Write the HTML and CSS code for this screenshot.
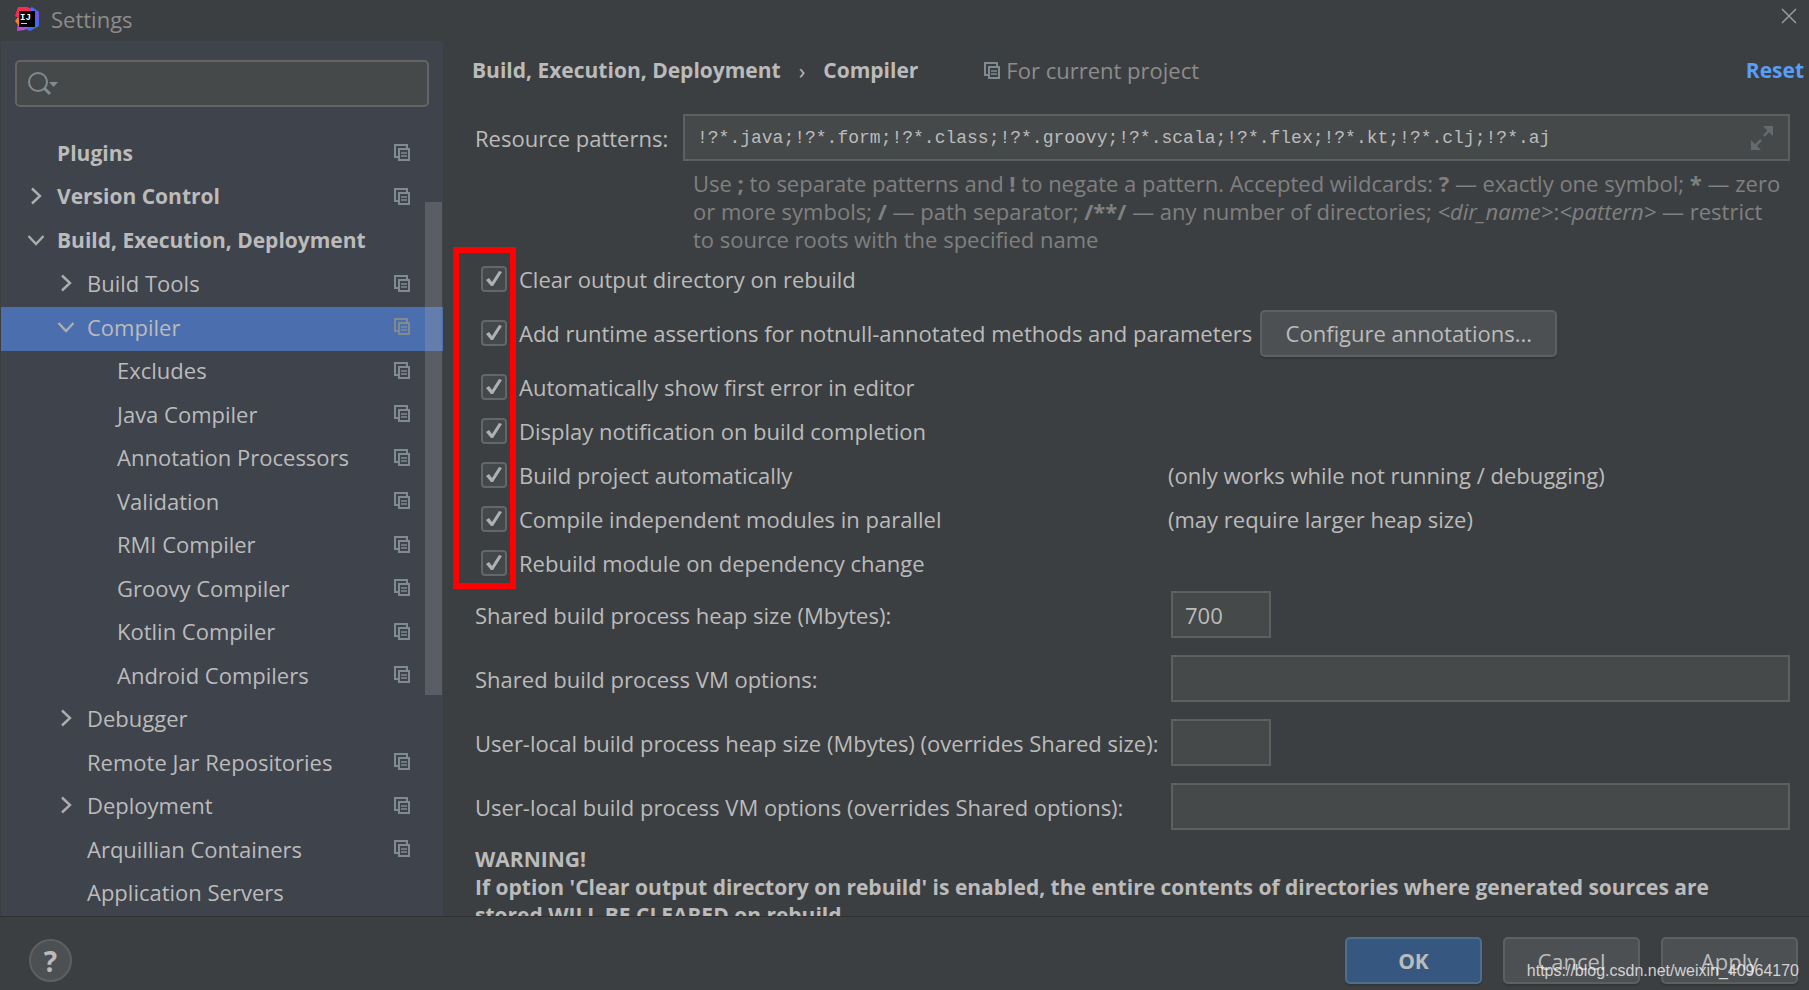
FILE: index.html
```html
<!DOCTYPE html>
<html lang="en">
<head>
    <meta charset="UTF-8">
    <meta name="viewport" content="width=device-width, initial-scale=1.0">
    <title>Settings</title>
    <link rel="stylesheet" href="styles.css">
</head>
<body>
    <!-- shared icons -->
    <svg class="icon-defs" width="0" height="0" aria-hidden="true">
        <symbol id="icon-project" viewBox="0 0 16 17">
            <path d="M13 4V1H1v12h3" fill="none" stroke="currentColor" stroke-width="2"/>
            <path d="M5 5h10v11H5z" fill="none" stroke="currentColor" stroke-width="2"/>
            <path d="M7 9h6M7 12h6" fill="none" stroke="currentColor" stroke-width="1.5"/>
        </symbol>
        <symbol id="icon-right" viewBox="0 0 20 20">
            <path d="M6 2.5l8 7.5-8 7.5" fill="none" stroke="currentColor" stroke-width="2.4"/>
        </symbol>
        <symbol id="icon-down" viewBox="0 0 20 20">
            <path d="M2.500 6l7.500 8 7.500-8" fill="none" stroke="currentColor" stroke-width="2.4"/>
        </symbol>
    </svg>

    <header class="titlebar">
        <svg class="logo" viewBox="0 0 24 24">
            <path d="M12 3l5-3 7 5v14l-9 5-6-3z" fill="#3f6df0"/>
            <path d="M19 3l5 2v8l-5-2z" fill="#6b57e0"/>
            <path d="M3 15l6 3 6 2-6 3-7 1z" fill="#b84fd0"/>
            <path d="M0 14l4-5 3 6-3 4z" fill="#fc801d"/>
            <path d="M3 0h10l4 5-5 7-8-1-4-2z" fill="#fe2857"/>
            <path d="M4 4h16v16H4z" fill="#000"/>
            <text x="5" y="13" class="logo-text">IJ</text>
            <path d="M6 16h6v1H6z" fill="#ccc"/>
        </svg>
        <h1>Settings</h1>
        <button class="close-btn" aria-label="Close">
            <svg viewBox="0 0 16 16"><path d="M1 1l14 14M15 1L1 15" fill="none" stroke="currentColor" stroke-width="1.5"/></svg>
        </button>
    </header>

    <div class="main">
        <aside class="sidebar">
            <div class="search">
                <svg viewBox="0 0 32 24">
                    <circle cx="11" cy="10" r="9" fill="none" stroke="currentColor" stroke-width="2"/>
                    <path d="M17 16l6 6" stroke="currentColor" stroke-width="3"/>
                    <path d="M22 10h9l-4.500 5z" fill="currentColor"/>
                </svg>
                <input type="text" aria-label="Search settings">
            </div>
            <nav class="tree">
                <a href="#" class="row bold"><span class="arrow"></span><span class="name">Plugins</span><svg class="project"><use href="#icon-project"/></svg></a>
                <a href="#" class="row bold"><svg class="arrow"><use href="#icon-right"/></svg><span class="name">Version Control</span><svg class="project"><use href="#icon-project"/></svg></a>
                <a href="#" class="row bold"><svg class="arrow"><use href="#icon-down"/></svg><span class="name">Build, Execution, Deployment</span></a>
                <a href="#" class="row level-1"><svg class="arrow"><use href="#icon-right"/></svg><span class="name">Build Tools</span><svg class="project"><use href="#icon-project"/></svg></a>
                <a href="#" class="row level-1 selected"><svg class="arrow"><use href="#icon-down"/></svg><span class="name">Compiler</span><svg class="project"><use href="#icon-project"/></svg></a>
                <a href="#" class="row level-2"><span class="arrow"></span><span class="name">Excludes</span><svg class="project"><use href="#icon-project"/></svg></a>
                <a href="#" class="row level-2"><span class="arrow"></span><span class="name">Java Compiler</span><svg class="project"><use href="#icon-project"/></svg></a>
                <a href="#" class="row level-2"><span class="arrow"></span><span class="name">Annotation Processors</span><svg class="project"><use href="#icon-project"/></svg></a>
                <a href="#" class="row level-2"><span class="arrow"></span><span class="name">Validation</span><svg class="project"><use href="#icon-project"/></svg></a>
                <a href="#" class="row level-2"><span class="arrow"></span><span class="name">RMI Compiler</span><svg class="project"><use href="#icon-project"/></svg></a>
                <a href="#" class="row level-2"><span class="arrow"></span><span class="name">Groovy Compiler</span><svg class="project"><use href="#icon-project"/></svg></a>
                <a href="#" class="row level-2"><span class="arrow"></span><span class="name">Kotlin Compiler</span><svg class="project"><use href="#icon-project"/></svg></a>
                <a href="#" class="row level-2"><span class="arrow"></span><span class="name">Android Compilers</span><svg class="project"><use href="#icon-project"/></svg></a>
                <a href="#" class="row level-1"><svg class="arrow"><use href="#icon-right"/></svg><span class="name">Debugger</span></a>
                <a href="#" class="row level-1"><span class="arrow"></span><span class="name">Remote Jar Repositories</span><svg class="project"><use href="#icon-project"/></svg></a>
                <a href="#" class="row level-1"><svg class="arrow"><use href="#icon-right"/></svg><span class="name">Deployment</span><svg class="project"><use href="#icon-project"/></svg></a>
                <a href="#" class="row level-1"><span class="arrow"></span><span class="name">Arquillian Containers</span><svg class="project"><use href="#icon-project"/></svg></a>
                <a href="#" class="row level-1"><span class="arrow"></span><span class="name">Application Servers</span></a>
                <div class="scrollbar"></div>
            </nav>
        </aside>

        <main class="content">
            <div class="breadcrumb">
                <h2>Build, Execution, Deployment</h2>
                <span class="separator">›</span>
                <h2>Compiler</h2>
                <span class="scope"><svg class="project"><use href="#icon-project"/></svg>For current project</span>
                <a href="#" class="reset">Reset</a>
            </div>

            <div class="patterns">
                <label for="patterns">Resource patterns:</label>
                <div class="pattern-field">
                    <input type="text" id="patterns" value="!?*.java;!?*.form;!?*.class;!?*.groovy;!?*.scala;!?*.flex;!?*.kt;!?*.clj;!?*.aj">
                    <svg viewBox="0 0 24 26"><path d="M13 1h10v10zM1 15v10h10z" fill="currentColor"/><path d="M14 11l6-7M4 22l7-7" stroke="currentColor" stroke-width="2.5"/></svg>
                </div>
            </div>
            <p class="hint">Use <b>;</b> to separate patterns and <b>!</b> to negate a pattern. Accepted wildcards: <b>?</b> — exactly one symbol; <b>*</b> — zero<br>or more symbols; <b>/</b> — path separator; <b>/**/</b> — any number of directories; <i>&lt;dir_name&gt;</i>:<i>&lt;pattern&gt;</i> — restrict<br>to source roots with the specified name</p>

            <div class="options">
                <div class="option">
                    <label><input type="checkbox" checked>Clear output directory on rebuild</label>
                </div>
                <div class="option with-button">
                    <label><input type="checkbox" checked>Add runtime assertions for notnull-annotated methods and parameters</label>
                    <button class="btn configure">Configure annotations...</button>
                </div>
                <div class="option">
                    <label><input type="checkbox" checked>Automatically show first error in editor</label>
                </div>
                <div class="option">
                    <label><input type="checkbox" checked>Display notification on build completion</label>
                </div>
                <div class="option">
                    <label><input type="checkbox" checked>Build project automatically</label>
                    <span>(only works while not running / debugging)</span>
                </div>
                <div class="option">
                    <label><input type="checkbox" checked>Compile independent modules in parallel</label>
                    <span>(may require larger heap size)</span>
                </div>
                <div class="option">
                    <label><input type="checkbox" checked>Rebuild module on dependency change</label>
                </div>
                <div class="highlight"></div>
            </div>

            <div class="fields">
                <label for="shared-heap">Shared build process heap size (Mbytes):</label>
                <input type="text" id="shared-heap" class="short" value="700">
                <label for="shared-vm">Shared build process VM options:</label>
                <input type="text" id="shared-vm">
                <label for="local-heap">User-local build process heap size (Mbytes) (overrides Shared size):</label>
                <input type="text" id="local-heap" class="short">
                <label for="local-vm">User-local build process VM options (overrides Shared options):</label>
                <input type="text" id="local-vm">
            </div>

            <p class="warning">WARNING!<br>If option 'Clear output directory on rebuild' is enabled, the entire contents of directories where generated sources are<br>stored WILL BE CLEARED on rebuild.</p>
        </main>
    </div>

    <footer class="footer">
        <button class="help-btn">?</button>
        <button class="btn primary">OK</button>
        <button class="btn">Cancel</button>
        <button class="btn">Apply</button>
        <span class="watermark">https://blog.csdn.net/weixin_40964170</span>
    </footer>
</body>
</html>
```
FILE: styles.css
```css
* {
    box-sizing: border-box;
}
body {
    margin: 0;
    height: 100vh;
    display: flex;
    flex-direction: column;
    overflow: hidden;
    font-family: "Open Sans", "Noto Sans", sans-serif;
    font-size: 22px;
    line-height: 28px;
    color: #bbbbbb;
    background-color: #3c3f41;
}
h1, h2, p {
    margin: 0;
    font-size: inherit;
}
h2 {
    font-size: 21px;
}
a {
    color: inherit;
    text-decoration: none;
}
input, button {
    font: inherit;
    color: inherit;
}
.icon-defs {
    position: absolute;
}

/* title bar */
.titlebar {
    display: flex;
    align-items: center;
    height: 41px;
    padding: 0 12px 4px 15px;
    flex-shrink: 0;
}
.titlebar h1 {
    flex: 1;
    margin-left: 12px;
    font-weight: normal;
    color: #8c8c8c;
}
.logo {
    width: 24px;
    height: 24px;
}
.logo-text {
    font: bold 9px "Liberation Mono", monospace;
    fill: #fff;
}
.close-btn {
    align-self: flex-start;
    margin-top: 4px;
    padding: 0;
    width: 16px;
    height: 24px;
    border: none;
    background: none;
    color: #9a9a9a;
}
.close-btn svg {
    display: block;
    width: 16px;
    height: 16px;
}

.main {
    flex: 1;
    display: flex;
    min-height: 0;
}

/* sidebar */
.sidebar {
    width: 443px;
    flex-shrink: 0;
    display: flex;
    flex-direction: column;
    padding-top: 19px;
    background-color: #3f434c;
    border-left: 1px solid #3c3f41;
}
.search {
    display: flex;
    align-items: center;
    height: 47px;
    margin: 0 14px 26px;
    padding: 0 10px;
    border: 2px solid #646464;
    border-radius: 5px;
    background-color: #45494a;
}
.search svg {
    width: 32px;
    height: 24px;
    color: #7f8b91;
}
.search input {
    flex: 1;
    min-width: 0;
    border: none;
    outline: none;
    background: none;
}
.tree {
    position: relative;
    flex: 1;
    display: flex;
    flex-direction: column;
}
.row {
    flex: 1;
    display: flex;
    align-items: center;
    padding: 0 33px 4px 25px;
}
.level-1 {
    padding-left: 55px;
}
.level-2 {
    padding-left: 85px;
}
.bold {
    font-size: 21px;
    font-weight: bold;
}
.selected {
    background-color: #4b6eaf;
}
.arrow {
    width: 20px;
    height: 20px;
    margin-right: 11px;
    color: #adadad;
}
.name {
    flex: 1;
    white-space: nowrap;
}
.project {
    width: 16px;
    height: 17px;
    color: #7f8b91;
}
.scrollbar {
    position: absolute;
    top: 69px;
    right: 1px;
    width: 17px;
    height: 63%;
    background-color: rgba(166, 166, 166, 0.27);
}

/* settings page */
.content {
    flex: 1;
    min-width: 0;
    overflow: hidden;
    padding: 15px 19px 0 32px;
}
.breadcrumb {
    display: flex;
    align-items: center;
    margin: 0 -14px 0 -3px;
    white-space: nowrap;
}
.separator {
    margin: 0 18px;
}
.scope {
    display: flex;
    align-items: center;
    margin-left: 66px;
    color: #8c8c8c;
}
.scope .project {
    margin-right: 6px;
}
.reset {
    margin-left: auto;
    font-size: 21px;
    font-weight: bold;
    color: #589df6;
}
.patterns {
    display: flex;
    align-items: center;
    margin-top: 30px;
}
.patterns label {
    width: 208px;
}
.pattern-field {
    flex: 1;
    display: flex;
    align-items: center;
    height: 47px;
    padding: 0 14px 0 12px;
    border: 2px solid #5e6060;
    background-color: #45494a;
}
.pattern-field input {
    flex: 1;
    padding: 0;
    border: none;
    outline: none;
    background: none;
    font-family: "Liberation Mono", monospace;
    font-size: 18px;
}
.pattern-field svg {
    width: 24px;
    height: 26px;
    color: #636b6f;
}
.hint {
    margin: 8px 0 4px 218px;
    color: #808080;
    white-space: nowrap;
}

/* check boxes */
.options {
    position: relative;
}
.option {
    display: grid;
    grid-template-columns: 693px 1fr;
    align-items: center;
    height: 44px;
    white-space: nowrap;
}
.with-button {
    display: flex;
    height: 64px;
}
.option label {
    display: flex;
    align-items: center;
}
.option input {
    appearance: none;
    width: 26px;
    height: 26px;
    margin: 0 12px 0 6px;
    border: 2px solid #646667;
    border-radius: 4px;
    background-color: #43494a;
}
.option input:checked::before {
    content: "";
    display: block;
    width: 22px;
    height: 22px;
    background-color: #b0b0b0;
    clip-path: polygon(3px 12px, 6px 10px, 9px 14px, 16px 3px, 19px 4px, 10px 18px, 8px 18px);
}
.highlight {
    position: absolute;
    top: -10px;
    bottom: -4px;
    left: -22px;
    width: 63px;
    border: 6px solid #ff0000;
    pointer-events: none;
}

/* buttons */
.btn {
    width: 137px;
    height: 47px;
    padding: 0;
    border: 2px solid #5e6060;
    border-radius: 5px;
    background-color: #4c5052;
    box-shadow: 0 2px 1px rgba(0, 0, 0, 0.15);
}
.configure {
    width: 297px;
    margin-left: 8px;
}
.primary {
    border-color: #4c708c;
    background-color: #365880;
    font-size: 21px;
    font-weight: bold;
}

/* build process fields */
.fields {
    display: grid;
    grid-template-columns: 696px 1fr;
    row-gap: 17px;
    align-items: center;
    margin-top: 6px;
}
.fields input {
    width: 100%;
    height: 47px;
    padding: 0 12px;
    border: 2px solid #5e6060;
    outline: none;
    background-color: #45494a;
}
.fields .short {
    width: 100px;
}
.warning {
    margin-top: 15px;
    font-size: 21px;
    font-weight: bold;
    white-space: nowrap;
}

/* footer */
.footer {
    position: relative;
    display: flex;
    align-items: center;
    gap: 21px;
    height: 74px;
    padding: 14px 11px 0 29px;
    flex-shrink: 0;
    border-top: 1px solid #323232;
}
.help-btn {
    width: 43px;
    height: 43px;
    margin-right: auto;
    padding: 0;
    border: 2px solid #5e6060;
    border-radius: 50%;
    background-color: #4c5052;
    font-size: 28px;
    font-weight: bold;
}
.watermark {
    position: absolute;
    right: 10px;
    bottom: 8px;
    font: 16px/22px "Liberation Sans", sans-serif;
    color: rgba(255, 255, 255, 0.75);
}
```
